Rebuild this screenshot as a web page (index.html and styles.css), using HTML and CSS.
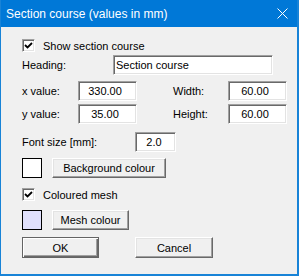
FILE: index.html
```html
<!DOCTYPE html>
<html>

<head>
  <title>Section course</title>
  <link rel="stylesheet" href="styles.css">
</head>

<body>
  <div class="window">
    <div class="titlebar">
      <span class="title">Section course (values in mm)</span>
      <svg class="close" width="11" height="11" viewBox="0 0 11 11">
        <path d="M0.5 0.5 L10.5 10.5 M10.5 0.5 L0.5 10.5" stroke="#fff" stroke-width="1" fill="none" />
      </svg>
    </div>

    <form class="content">
      <label class="check-row">
        <span class="checkbox">
          <svg width="9" height="9" viewBox="0 0 9 9">
            <path d="M1 4 L3.5 6.5 L8 2" stroke="#000" stroke-width="1.8" fill="none" />
          </svg>
        </span>
        Show section course
      </label>

      <div class="row row-heading">
        <span class="label">Heading:</span>
        <input type="text" class="field heading-field" value="Section course">
      </div>

      <div class="row row-x">
        <span class="label label-short">x value:</span>
        <input type="text" class="field num-field" value="330.00">
        <span class="label label-right">Width:</span>
        <input type="text" class="field num-field" value="60.00">
      </div>

      <div class="row row-y">
        <span class="label label-short">y value:</span>
        <input type="text" class="field num-field" value="35.00">
        <span class="label label-right">Height:</span>
        <input type="text" class="field num-field" value="60.00">
      </div>

      <div class="row row-font">
        <span class="label label-font">Font size [mm]:</span>
        <input type="text" class="field font-field" value="2.0">
      </div>

      <div class="row row-bg">
        <span class="swatch swatch-white"></span>
        <button type="button" class="btn btn-bg">Background colour</button>
      </div>

      <label class="check-row check-mesh">
        <span class="checkbox">
          <svg width="9" height="9" viewBox="0 0 9 9">
            <path d="M1 4 L3.5 6.5 L8 2" stroke="#000" stroke-width="1.8" fill="none" />
          </svg>
        </span>
        Coloured mesh
      </label>

      <div class="row row-mesh">
        <span class="swatch swatch-lavender"></span>
        <button type="button" class="btn btn-mesh">Mesh colour</button>
      </div>

      <div class="row row-actions">
        <button type="button" class="btn btn-default">OK</button>
        <button type="button" class="btn btn-cancel">Cancel</button>
      </div>
    </form>
  </div>
</body>

</html>
```

FILE: styles.css
```css
body {
  margin: 0;
  font-family: "Liberation Sans", Arial, sans-serif;
  font-size: 11px;
  color: #000;
}

.window {
  box-sizing: border-box;
  width: 299px;
  height: 276px;
  background-color: #f0f0f0;
  border-left: 1px solid #1883d7;
  border-right: 2px solid #1883d7;
  border-bottom: 2px solid #1883d7;
}

.titlebar {
  height: 27px;
  background-color: #0078d7;
  display: flex;
  align-items: center;
  justify-content: space-between;
  padding: 0 9px 0 5px;
}

.title {
  color: #fff;
  font-size: 12px;
}

.close {
  display: block;
  margin-top: -1px;
}

.content {
  display: flex;
  flex-direction: column;
  padding-left: 21px;
}

.check-row {
  display: flex;
  align-items: center;
  height: 13px;
  margin-top: 12px;
}

.check-mesh {
  margin-top: 10px;
}

.checkbox {
  box-sizing: border-box;
  width: 13px;
  height: 13px;
  margin-right: 8px;
  background-color: #fff;
  border: 1px solid;
  border-color: #a0a0a0 #fff #fff #a0a0a0;
  box-shadow: inset 1px 1px #696969, inset -1px -1px #e3e3e3;
  display: flex;
  align-items: center;
  justify-content: center;
}

.checkbox svg {
  display: block;
}

.row {
  display: flex;
  align-items: center;
  height: 20px;
}

.row-heading {
  margin-top: 3px;
}

.row-x {
  margin-top: 6px;
}

.row-y {
  margin-top: 3px;
}

.row-font {
  margin-top: 8px;
}

.row-bg {
  margin-top: 6px;
}

.row-mesh {
  margin-top: 9px;
}

.row-actions {
  margin-top: 7px;
  height: 21px;
}

.label {
  width: 91px;
}

.label-short {
  width: 56px;
}

.label-right {
  width: 55px;
  margin-left: 36px;
}

.label-font {
  width: 113px;
}

.field {
  box-sizing: border-box;
  height: 20px;
  margin: 0;
  padding: 0 2px;
  font-family: "Liberation Sans", Arial, sans-serif;
  font-size: 11px;
  color: #000;
  background-color: #fff;
  border: 1px solid;
  border-color: #a0a0a0 #fff #fff #a0a0a0;
  box-shadow: inset 1px 1px #696969, inset -1px -1px #e3e3e3;
  outline: none;
}

.heading-field {
  width: 160px;
}

.num-field {
  width: 59px;
  text-align: center;
  padding-right: 7px;
}

.font-field {
  width: 41px;
  text-align: center;
  padding-right: 5px;
}

.swatch {
  box-sizing: border-box;
  width: 20px;
  height: 20px;
  border: 1px solid #000;
  margin-right: 10px;
}

.swatch-white {
  background-color: #fff;
}

.swatch-lavender {
  background-color: #e0e0fc;
}

.btn {
  box-sizing: border-box;
  height: 20px;
  margin: 0;
  padding: 0;
  font-family: "Liberation Sans", Arial, sans-serif;
  font-size: 11px;
  color: #000;
  background-color: #f0f0f0;
  border: 1px solid;
  border-color: #fff #696969 #696969 #fff;
  box-shadow: inset -1px -1px #a0a0a0, inset 1px 1px #e3e3e3;
}

.btn-bg {
  width: 114px;
}

.btn-mesh {
  width: 77px;
}

.btn-default {
  width: 77px;
  height: 21px;
  border-color: #646464;
  box-shadow: inset 1px 1px #fff, inset -1px -1px #696969, inset -2px -2px #a0a0a0;
}

.btn-cancel {
  width: 78px;
  height: 21px;
  margin-left: 36px;
}
```
